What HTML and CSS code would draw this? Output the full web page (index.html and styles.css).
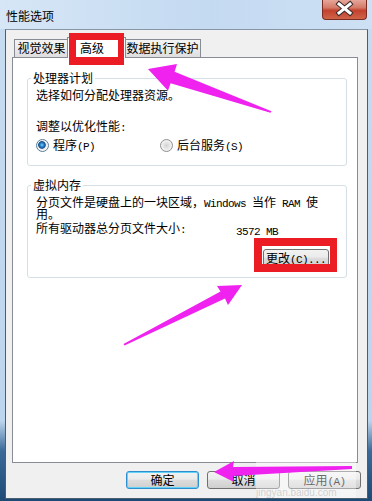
FILE: index.html
```html
<!DOCTYPE html>
<html lang="zh-CN">
<head>
    <meta charset="UTF-8">
    <title>性能选项</title>
    <link rel="stylesheet" href="styles.css">
</head>
<body>
    <div class="window">
        <div class="titlebar">
            <span class="title">性能选项</span>
            <div class="close">
                <svg width="45" height="20" viewBox="0 0 45 20">
                    <path d="M17 5 L28 14 M28 5 L17 14" stroke="#3a2a2a" stroke-width="5" stroke-linecap="square"/>
                    <path d="M17 5 L28 14 M28 5 L17 14" stroke="#ffffff" stroke-width="3" stroke-linecap="square"/>
                </svg>
            </div>
        </div>
        <div class="client">
            <div class="tabs">
                <div class="tab tab-visual">视觉效果</div>
                <div class="tab tab-active">高级</div>
                <div class="tab tab-dep">数据执行保护</div>
            </div>
            <div class="panel">
                <fieldset class="group">
                    <legend>处理器计划</legend>
                    <p class="line">选择如何分配处理器资源。</p>
                    <p class="line spaced">调整以优化性能<span class="asc">:</span></p>
                    <div class="radios">
                        <div class="option"><span class="radio checked"></span><span>程序<span class="asc">(P)</span></span></div>
                        <div class="option"><span class="radio"></span><span>后台服务<span class="asc">(S)</span></span></div>
                    </div>
                </fieldset>
                <fieldset class="group group-memory">
                    <legend>虚拟内存</legend>
                    <p class="line wrap">分页文件是硬盘上的一块区域，<span class="asc">Windows </span>当作<span class="asc"> RAM </span>使<br>用。</p>
                    <div class="size-row">
                        <span class="size-label">所有驱动器总分页文件大小<span class="asc">:</span></span>
                        <span class="size-value"><span class="asc">3572 MB</span></span>
                    </div>
                    <div class="change-row">
                        <button class="btn btn-change">更改<span class="asc">(C)...</span></button>
                    </div>
                </fieldset>
            </div>
            <div class="actions">
                <button class="btn btn-default">确定</button>
                <button class="btn">取消</button>
                <button class="btn">应用<span class="asc">(A)</span></button>
            </div>
        </div>

        <div class="watermark">jingyan.baidu.com</div>

        <svg class="marks" width="372" height="501" viewBox="0 0 372 501">
            <!-- red frames -->
            <path fill="#ec1c24" fill-rule="evenodd" d="M69 33 H124 V65 H69 Z M76 40 V57 H118 V40 Z"/>
            <path fill="#ec1c24" fill-rule="evenodd" d="M254 238 H337 V272 H254 Z M262 246 V264 H330 V246 Z"/>
            <!-- arrows -->
            <polygon fill="#ef22ef" points="148,69 177,64 174.6,71.8 271.5,111.2 270.5,112.8 170.6,83.2 168,90.7"/>
            <polygon fill="#ef22ef" points="242,285 228,305 225,298.5 124.5,345.5 123.5,344 220.5,291.5 217,286"/>
            <polygon fill="#ef22ef" points="214,472 234,461 233,467 352,466 352,469 233,476 234,482"/>
        </svg>
    </div>
</body>
</html>
```

FILE: styles.css
```css
body {
    margin: 0;
    font-family: "Noto Sans CJK SC", sans-serif;
    font-size: 12px;
    color: #000;
}
p {
    margin: 0;
}
.asc {
    font-family: "Liberation Mono", monospace;
    font-size: 11px;
    line-height: 0;
    letter-spacing: -0.6px;
}
.window {
    position: relative;
    width: 372px;
    height: 501px;
    display: flex;
    flex-direction: column;
    overflow: hidden;
    background: linear-gradient(180deg, #c7dcf1 0%, #bcd5ee 84%, #3a6a98 90%, #1d4a75 100%);
}
.titlebar {
    height: 29px;
    display: flex;
    align-items: flex-start;
    background: linear-gradient(90deg, #d6e6f6 0%, #c4daf1 55%, #cde0f4 100%);
}
.title {
    margin-top: 10px;
    padding-left: 6px;
    line-height: 12px;
}
.close {
    margin-left: auto;
    margin-right: 5px;
    width: 45px;
    height: 20px;
    box-sizing: border-box;
    border: 1px solid #7b2b22;
    border-top: none;
    border-radius: 0 0 4px 4px;
    background: linear-gradient(180deg, #e6a69a 0%, #d47a68 40%, #c2422d 55%, #cf6448 100%);
}
.close svg {
    display: block;
    margin-top: -1px;
    margin-left: -1px;
}
.client {
    flex: 1;
    margin: 0 4px 2px 5px;
    display: flex;
    flex-direction: column;
    background: #f0f0f0;
    border: 1px solid #4a5e72;
    border-top-color: #8796a6;
}
.tabs {
    display: flex;
    height: 18px;
    padding: 9px 0 0 8px;
}
.tab {
    box-sizing: border-box;
    height: 18px;
    border: 1px solid #898c95;
    border-bottom: none;
    background: linear-gradient(180deg, #f4f4f4 0%, #ebebeb 50%, #dedede 100%);
    text-align: center;
    line-height: 16px;
}
.tab-visual {
    width: 55px;
}
.tab-active {
    position: relative;
    z-index: 1;
    width: 59px;
    height: 21px;
    margin: -2px -2px 0;
    background: #fff;
    line-height: 19px;
    text-align: left;
    padding-left: 12px;
}
.tab-dep {
    width: 77px;
}
.panel {
    flex: 1;
    margin: 0 9px 0 6px;
    padding: 14px 0 0 14px;
    background: #fff;
    border: 1px solid #898c95;
}
.group {
    box-sizing: border-box;
    width: 320px;
    margin: 0;
    padding: 0 8px 13px;
    border: 1px solid #d5dfe5;
    border-radius: 3px;
}
.group legend {
    margin-left: -5px;
    padding: 0 2px;
    line-height: 12px;
}
.line {
    line-height: 12px;
    margin-top: 5px;
}
.line.spaced {
    margin-top: 19px;
}
.radios {
    display: flex;
    margin-top: 6px;
    height: 14px;
}
.option {
    width: 124px;
    display: flex;
    align-items: center;
    gap: 4px;
    line-height: 14px;
}
.radio {
    box-sizing: border-box;
    width: 13px;
    height: 13px;
    border-radius: 50%;
    border: 1px solid #8e8f8f;
    background: radial-gradient(circle, #d2d2d2 0, #e6e6e6 3px, #f7f7f7 6px);
}
.radio.checked {
    border-color: #5b7c99;
    background: radial-gradient(circle at 45% 45%, #7fd4f8 0, #2a86cc 1.8px, #134d8a 3.4px, #e9eef2 4.2px, #f6f6f6 6px);
}
.group-memory {
    margin-top: 13px;
    padding-bottom: 10px;
}
.line.wrap {
    line-height: 12px;
}
.size-row {
    display: flex;
    margin-top: 2px;
    line-height: 12px;
}
.size-label {
    width: 200px;
}
.size-value {
    padding-top: 2px;
}
.change-row {
    display: flex;
    justify-content: flex-end;
    margin: 13px 9px 0 0;
}
.btn {
    box-sizing: border-box;
    height: 18px;
    padding: 0;
    border: 1px solid #707070;
    border-radius: 3px;
    background: linear-gradient(180deg, #f2f2f2 0%, #ebebeb 45%, #dddddd 50%, #cfcfcf 100%);
    font-family: "Noto Sans CJK SC", sans-serif;
    font-size: 12px;
    line-height: 16px;
    color: #000;
    white-space: nowrap;
}
.btn-change {
    width: 66px;
}
.actions {
    display: flex;
    justify-content: flex-end;
    gap: 8px;
    margin-top: 8px;
    padding: 0 6px 9px 0;
}
.actions .btn {
    width: 73px;
}
.btn-default {
    border-color: #2b8fd0;
    box-shadow: inset 0 0 0 1px #62d3f7;
}
.watermark {
    position: absolute;
    z-index: 2;
    left: 256px;
    top: 450px;
    width: 100px;
    height: 48px;
    box-sizing: border-box;
    padding-top: 38px;
    background: linear-gradient(180deg, rgba(255, 255, 255, 0.5) 0%, rgba(255, 255, 255, 0.35) 100%);
    color: rgba(130, 130, 130, 0.35);
    font-family: "Liberation Sans", sans-serif;
    font-size: 10px;
    line-height: 10px;
    white-space: nowrap;
}
.marks {
    position: absolute;
    z-index: 3;
    left: 0;
    top: 0;
    pointer-events: none;
}
```
